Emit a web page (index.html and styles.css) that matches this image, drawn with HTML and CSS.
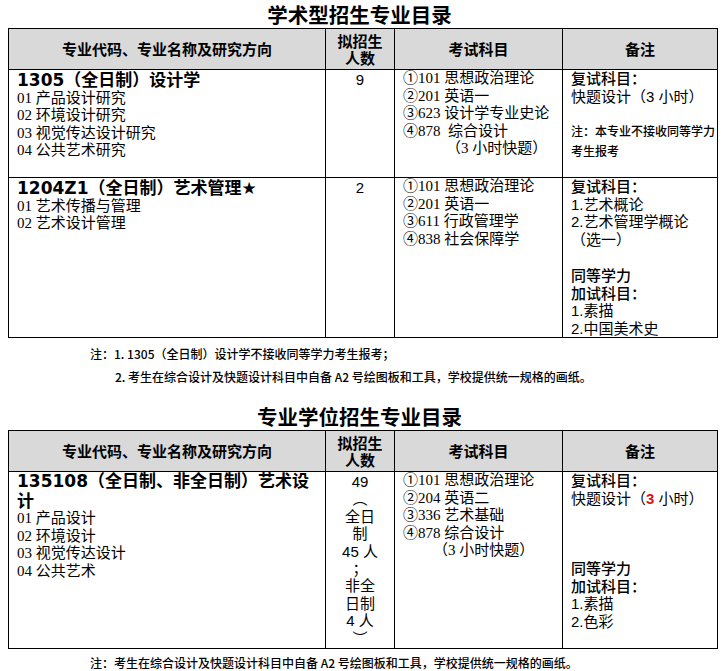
FILE: index.html
```html
<!DOCTYPE html>
<html lang="zh-CN">
<head>
<meta charset="utf-8">
<title>招生专业目录</title>
<link rel="stylesheet" href="styles.css">
</head>
<body>
<h1 class="title">学术型招生专业目录</h1>
<table class="cat">
  <colgroup><col class="c1"><col class="c2"><col class="c3"><col class="c4"></colgroup>
  <thead>
    <tr class="head">
      <th>专业代码、专业名称及研究方向</th>
      <th>拟招生<br>人数</th>
      <th>考试科目</th>
      <th>备注</th>
    </tr>
  </thead>
  <tbody>
    <tr class="r1">
      <td class="major">
        <div class="mname">1305（全日制）设计学</div>
        <div>01 产品设计研究</div>
        <div>02 环境设计研究</div>
        <div>03 视觉传达设计研究</div>
        <div>04 公共艺术研究</div>
      </td>
      <td class="num">9</td>
      <td class="exam">
        <div>①101 思想政治理论</div>
        <div>②201 英语一</div>
        <div>③623 设计学专业史论</div>
        <div>④878&nbsp; 综合设计</div>
        <div class="ind1">（3 小时快题）</div>
      </td>
      <td class="remark">
        <div class="lbl">复试科目：</div>
        <div>快题设计（3 小时）</div>
        <div class="small">注：本专业不接收同等学力<br>考生报考</div>
      </td>
    </tr>
    <tr class="r2">
      <td class="major">
        <div class="mname">1204Z1（全日制）艺术管理★</div>
        <div>01 艺术传播与管理</div>
        <div>02 艺术设计管理</div>
      </td>
      <td class="num">2</td>
      <td class="exam">
        <div>①101 思想政治理论</div>
        <div>②201 英语一</div>
        <div>③611 行政管理学</div>
        <div>④838 社会保障学</div>
      </td>
      <td class="remark">
        <div class="lbl">复试科目：</div>
        <div>1.艺术概论</div>
        <div>2.艺术管理学概论</div>
        <div>（选一）</div>
        <div class="gap1"></div>
        <div class="lbl">同等学力</div>
        <div class="lbl">加试科目：</div>
        <div>1.素描</div>
        <div>2.中国美术史</div>
      </td>
    </tr>
  </tbody>
</table>
<div class="notes">
  <p>注：1. 1305（全日制）设计学不接收同等学力考生报考；</p>
  <p class="sub">2. 考生在综合设计及快题设计科目中自备 A2 号绘图板和工具，学校提供统一规格的画纸。</p>
</div>

<h1 class="title title2">专业学位招生专业目录</h1>
<table class="cat">
  <colgroup><col class="c1"><col class="c2"><col class="c3"><col class="c4"></colgroup>
  <thead>
    <tr class="head">
      <th>专业代码、专业名称及研究方向</th>
      <th>拟招生<br>人数</th>
      <th>考试科目</th>
      <th>备注</th>
    </tr>
  </thead>
  <tbody>
    <tr class="r3">
      <td class="major">
        <div class="mname">135108（全日制、非全日制）艺术设计</div>
        <div>01 产品设计</div>
        <div>02 环境设计</div>
        <div>03 视觉传达设计</div>
        <div>04 公共艺术</div>
      </td>
      <td class="num numlist">
        <div>49</div>
        <div>︵</div>
        <div>全日</div>
        <div>制</div>
        <div>45 人</div>
        <div>；</div>
        <div>非全</div>
        <div>日制</div>
        <div>4 人</div>
        <div>︶</div>
      </td>
      <td class="exam">
        <div>①101 思想政治理论</div>
        <div>②204 英语二</div>
        <div>③336 艺术基础</div>
        <div>④878 综合设计</div>
        <div class="ind2">（3 小时快题）</div>
      </td>
      <td class="remark">
        <div class="lbl">复试科目：</div>
        <div>快题设计（<span class="red">3</span> 小时）</div>
        <div class="gap3"></div>
        <div class="lbl">同等学力</div>
        <div class="lbl">加试科目：</div>
        <div>1.素描</div>
        <div>2.色彩</div>
      </td>
    </tr>
  </tbody>
</table>
<div class="notes notes2">
  <p>注：考生在综合设计及快题设计科目中自备 A2 号绘图板和工具，学校提供统一规格的画纸。</p>
</div>
</body>
</html>
```
FILE: styles.css
```css
html, body {
  margin: 0;
  padding: 0;
  background: #fff;
  color: #000;
}
body {
  width: 725px;
  font-family: "Noto Sans CJK SC", sans-serif;
}
.title {
  margin: 0 0 0 8px;
  width: 703px;
  padding-right: 5px;
  text-align: center;
  font-family: "Noto Sans CJK SC", sans-serif;
  font-weight: 700;
  font-size: 20.5px;
  line-height: 28px;
  height: 28px;
}
.title2 {
  margin-top: 14px;
}
.cat {
  margin-left: 8px;
  width: 709px;
  border-collapse: collapse;
  table-layout: fixed;
}
.c1 { width: 317px; }
.c2 { width: 69px; }
.c3 { width: 168px; }
.c4 { width: 155px; }
.cat th {
  background: #d9d9d9;
  border: 1px solid #000;
  font-family: "Liberation Sans", "Noto Sans CJK SC", sans-serif;
  font-weight: 700;
  font-size: 15px;
  line-height: 17.5px;
  padding: 2px 0 0;
  vertical-align: middle;
  text-align: center;
}
.head { height: 41px; }
.r1 { height: 108px; }
.r2 { height: 159px; }
.r3 { height: 177px; }
.cat td {
  border: 1px solid #000;
  vertical-align: top;
  padding: 0 8px;
  font-size: 15px;
  line-height: 17.5px;
}
.major {
  font-family: "Liberation Serif", "Noto Sans CJK SC", serif;
  padding-right: 4px !important;
}
.mname {
  font-family: "DejaVu Sans", "Noto Sans CJK SC", sans-serif;
  font-weight: 700;
  font-size: 17px;
  line-height: 20px;
  margin-top: -0.5px;
}
.r3 .mname {
  line-height: 20px;
  margin-top: -1px;
  margin-bottom: -1px;
}
.num {
  text-align: center;
  font-family: "Liberation Sans", "Noto Sans CJK SC", sans-serif;
  font-size: 15px !important;
  padding: 1px 0 0 !important;
}
.numlist {
  line-height: 17.4px !important;
}
.exam {
  font-family: "Liberation Serif", "Noto Sans CJK SC", serif;
}
.ind1 { padding-left: 43px; }
.ind2 { padding-left: 30px; }
.remark {
  font-family: "Liberation Sans", "Noto Sans CJK SC", sans-serif;
  padding-right: 0 !important;
  white-space: nowrap;
}
.lbl {
  font-weight: 500;
}
.small {
  font-family: "Noto Sans CJK SC", sans-serif;
  font-size: 12px;
  line-height: 20px;
  font-weight: 500;
  margin-top: 16px;
}
.gap1 { height: 19px; }
.gap3 { height: 53px; }
.red {
  color: #e01010;
  font-weight: 700;
}
.notes {
  padding: 4px 0 0 90px;
  font-family: "Noto Sans CJK SC", sans-serif;
  font-size: 12px;
  font-weight: 500;
  line-height: 23px;
}
.notes p {
  margin: 0;
  white-space: nowrap;
}
.notes .sub {
  padding-left: 25px;
}
.notes2 {
  padding-top: 2px;
}
```
